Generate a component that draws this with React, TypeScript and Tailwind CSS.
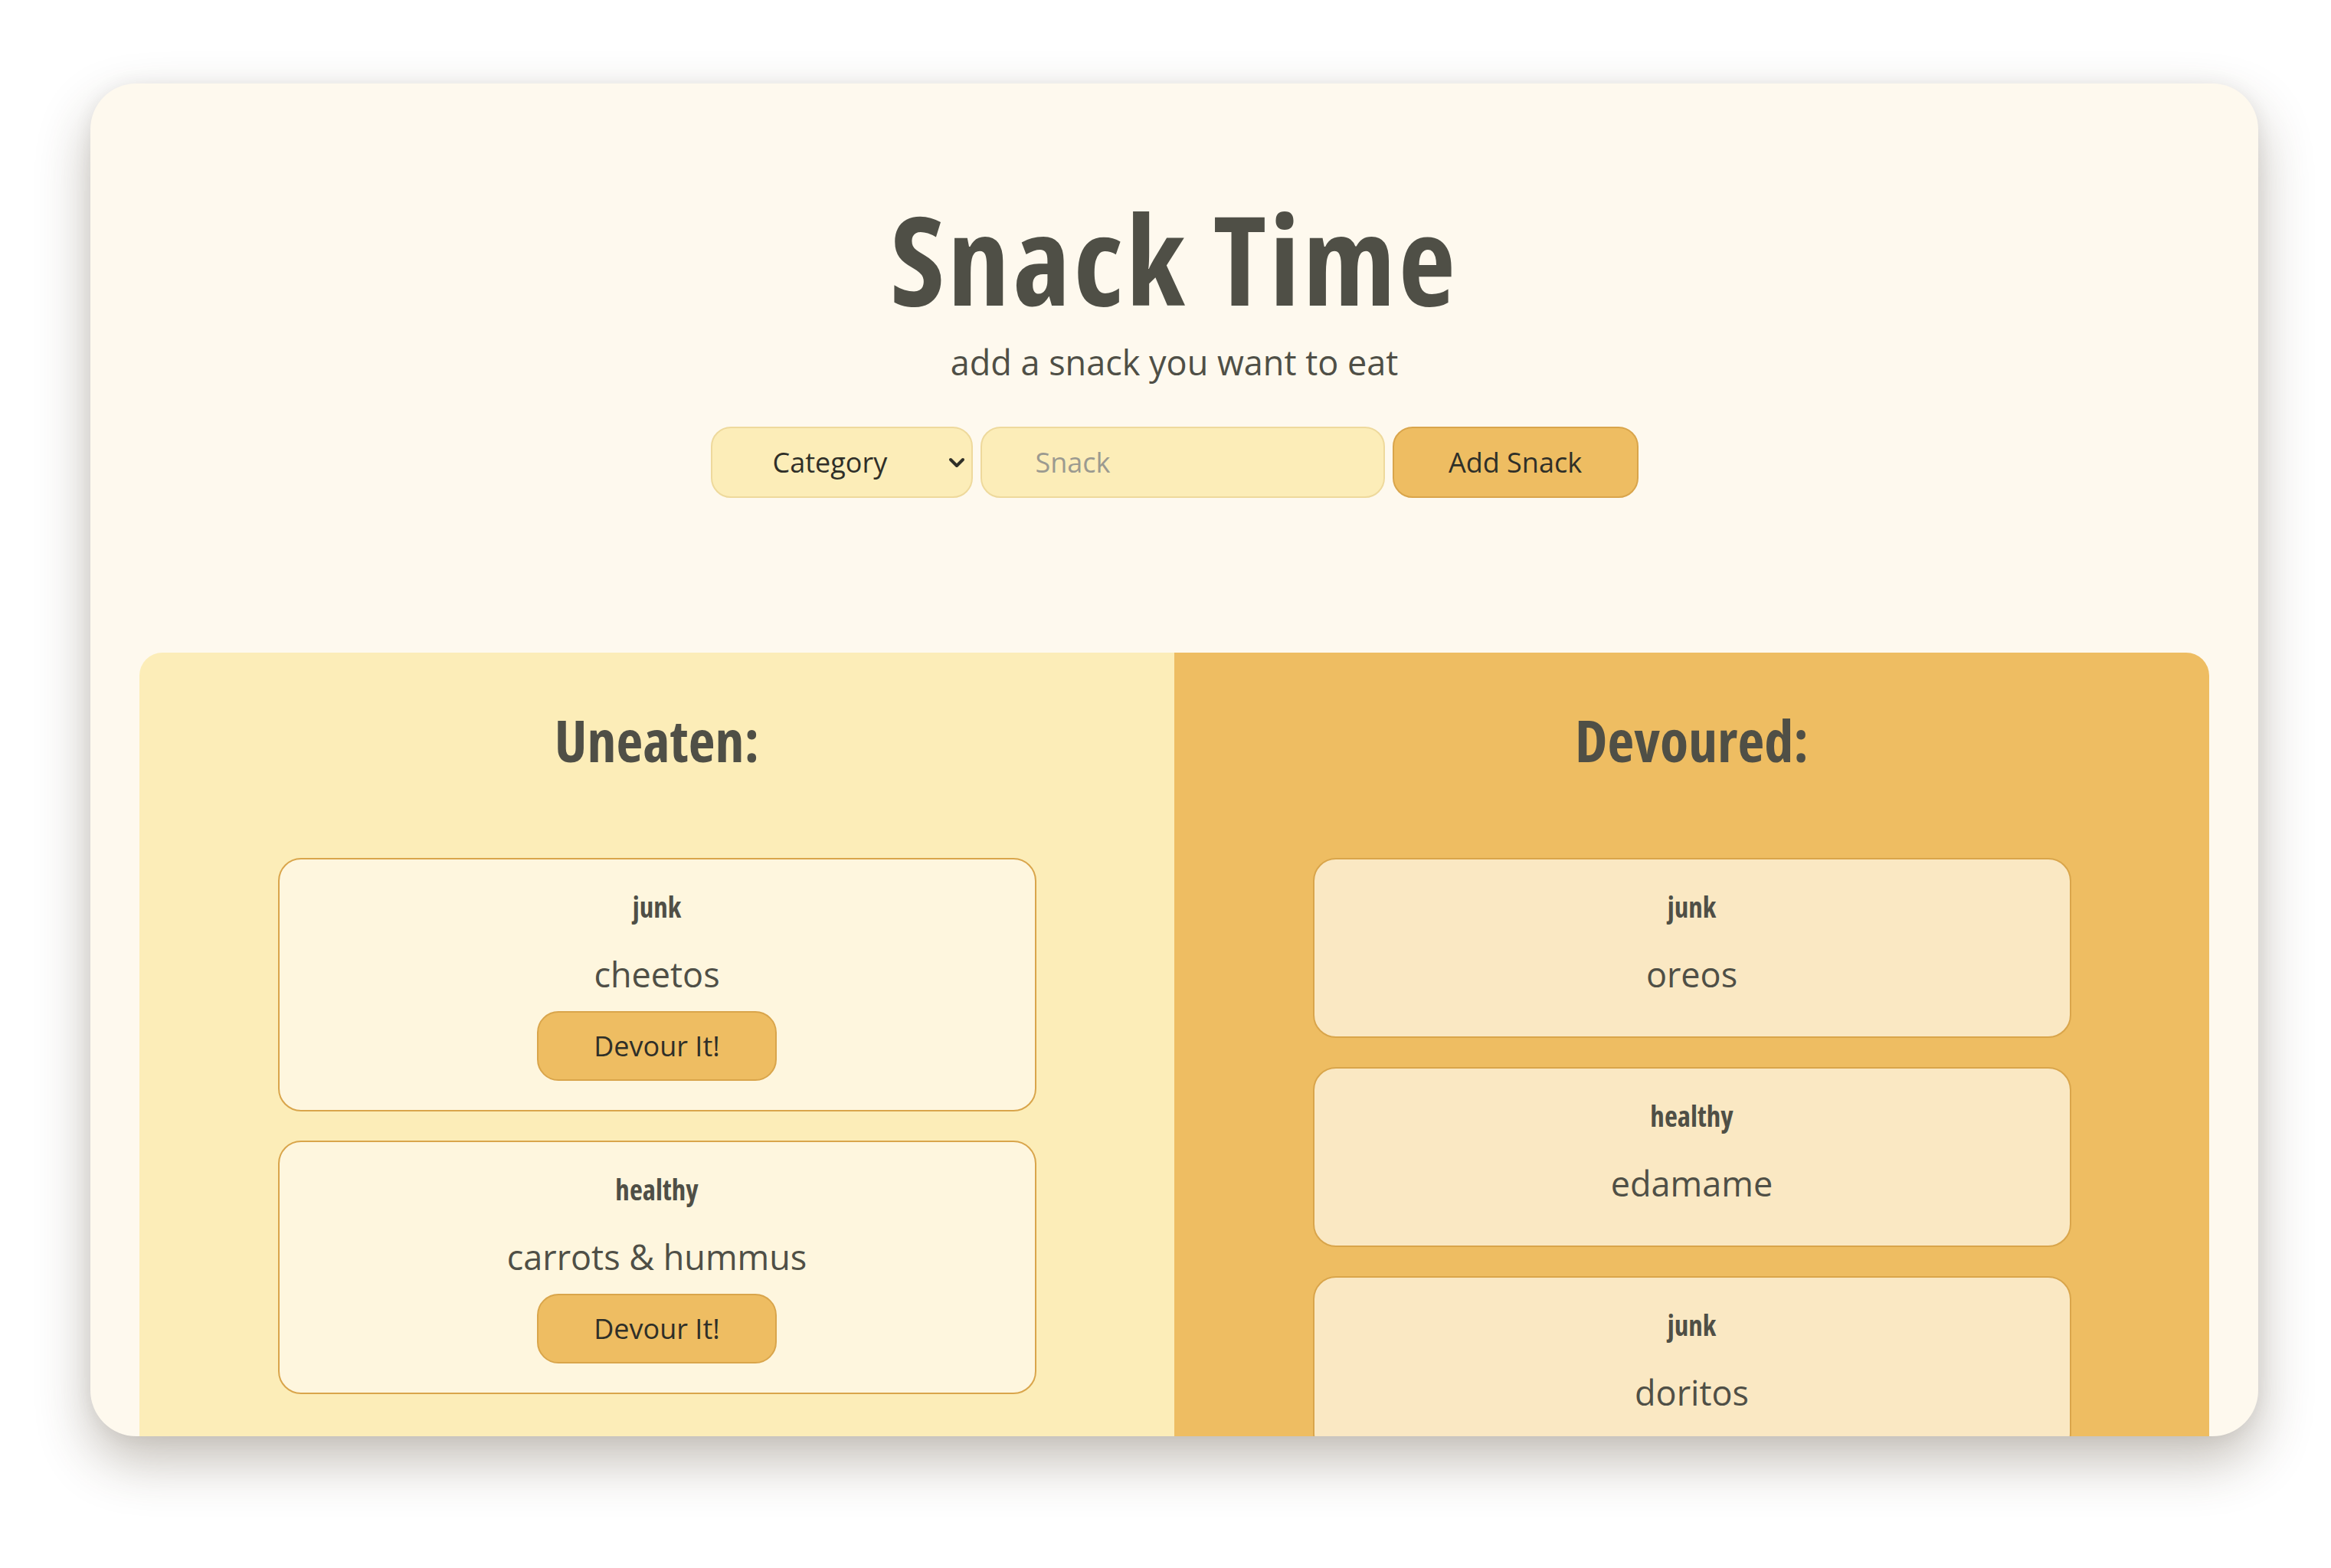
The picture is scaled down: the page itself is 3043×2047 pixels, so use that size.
import { useState } from 'react';

type Snack = { id: number; category: string; name: string; devoured: boolean };

const initialSnacks: Snack[] = [
  { id: 1, category: 'junk', name: 'cheetos', devoured: false },
  { id: 2, category: 'healthy', name: 'carrots & hummus', devoured: false },
  { id: 3, category: 'junk', name: 'oreos', devoured: true },
  { id: 4, category: 'healthy', name: 'edamame', devoured: true },
  { id: 5, category: 'junk', name: 'doritos', devoured: true },
];

const SnackCard = ({ snack, onDevour }: { snack: Snack; onDevour: (id: number) => void }) => (
  <div
    className={`w-[990px] shrink-0 rounded-[30px] border-2 border-[#d9a54b] flex flex-col items-center pt-[40px] ${
      snack.devoured ? 'bg-[#fae8c3] pb-[51px]' : 'bg-[#fef6de] pb-[38px]'
    }`}
  >
    <p className="font-bold font-stretch-condensed text-[37px] leading-[44px] text-[#4f4f46]">{snack.category}</p>
    <p className="mt-[35px] text-[45px] leading-[61px] text-[#4f4f46]">{snack.name}</p>
    {!snack.devoured && (
      <button
        onClick={() => onDevour(snack.id)}
        className="mt-[18px] h-[91px] px-[72px] rounded-[28px] border-2 border-[#d9a54b] bg-[#eebd62] text-[36px] text-[#2f2f28]"
      >
        Devour It!
      </button>
    )}
  </div>
);

export default function App() {
  const [snacks, setSnacks] = useState<Snack[]>(initialSnacks);
  const [category, setCategory] = useState('');
  const [name, setName] = useState('');

  const addSnack = () => {
    if (!name || !category) return;
    setSnacks([...snacks, { id: Date.now(), category, name, devoured: false }]);
    setName('');
  };

  const devour = (id: number) =>
    setSnacks(snacks.map(s => (s.id === id ? { ...s, devoured: true } : s)));

  return (
    <div className="min-h-screen w-full bg-white pl-[118px] pt-[109px] font-['Open_Sans',sans-serif] text-[#4f4f46]">
      <div className="w-[2830px] h-[1766px] rounded-[60px] bg-[#fef9ee] overflow-hidden flex flex-col items-center shadow-[0_32px_70px_rgba(70,55,35,0.32),0_0_24px_rgba(0,0,0,0.06)]">
        <h1 className="mt-[146px] font-bold font-stretch-condensed tracking-[4px] text-[162px] leading-[1] text-[#4f4f46]">Snack Time</h1>
        <p className="mt-[25px] text-[45px] leading-[61px]">add a snack you want to eat</p>

        <div className="mt-[54px] flex gap-[10px] h-[93px]">
          <div className="relative w-[342px]">
            <select
              value={category}
              onChange={e => setCategory(e.target.value)}
              className="appearance-none w-full h-full rounded-[26px] border-2 border-[#eed99c] bg-[#fcedb8] pl-[79px] text-[36px] text-[#2f2f28] outline-none"
            >
              <option value="">Category</option>
              <option value="junk">junk</option>
              <option value="healthy">healthy</option>
            </select>
            <svg
              className="absolute right-[10px] top-1/2 -translate-y-1/2 w-[22px] h-[16px] pointer-events-none"
              viewBox="0 0 22 16"
            >
              <path d="M3 4 L11 12 L19 4" fill="none" stroke="#2f2f28" strokeWidth="4" strokeLinecap="round" strokeLinejoin="round" />
            </svg>
          </div>
          <input
            value={name}
            onChange={e => setName(e.target.value)}
            placeholder="Snack"
            className="w-[528px] h-full rounded-[26px] border-2 border-[#eed99c] bg-[#fcedb8] pl-[70px] text-[36px] text-[#2f2f28] placeholder:text-[#9b9a90] outline-none"
          />
          <button
            onClick={addSnack}
            className="w-[321px] h-full rounded-[26px] border-2 border-[#d9a54b] bg-[#eebd62] text-[36px] text-[#2f2f28]"
          >
            Add Snack
          </button>
        </div>

        <div className="mt-[202px] w-[2702px] flex-1 flex rounded-t-[30px] overflow-hidden">
          <div className="flex-1 bg-[#fcedb8] flex flex-col items-center">
            <h2 className="mt-[65px] font-bold font-stretch-condensed text-[76px] leading-[98px]">Uneaten:</h2>
            <div className="mt-[105px] flex flex-col items-center gap-[38px]">
              {snacks.filter(s => !s.devoured).map(s => (
                <SnackCard key={s.id} snack={s} onDevour={devour} />
              ))}
            </div>
          </div>
          <div className="flex-1 bg-[#eebd62] flex flex-col items-center">
            <h2 className="mt-[65px] font-bold font-stretch-condensed text-[76px] leading-[98px]">Devoured:</h2>
            <div className="mt-[105px] flex flex-col items-center gap-[38px]">
              {snacks.filter(s => s.devoured).map(s => (
                <SnackCard key={s.id} snack={s} onDevour={devour} />
              ))}
            </div>
          </div>
        </div>
      </div>
    </div>
  );
}
